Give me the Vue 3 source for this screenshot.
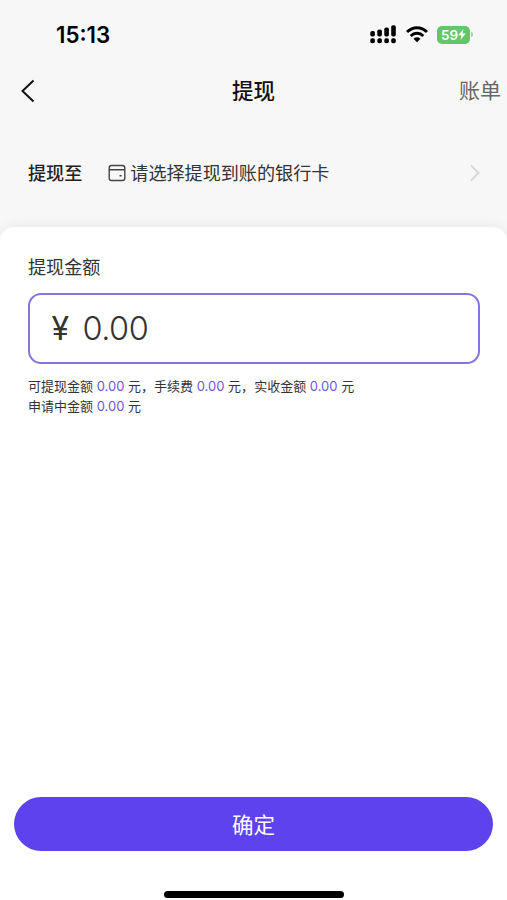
<template>
  <div class="page">
    <div class="statusBar">
      <span class="time">15:13</span>
      <div class="statusIcons">
        <svg class="signal" width="26" height="19" viewBox="0 0 26 19">
          <g fill="#000">
            <rect x="0.3" y="6" width="4.6" height="5.5" rx="1.8" />
            <rect x="7.3" y="4.5" width="4.6" height="7" rx="1.8" />
            <rect x="14.3" y="2.5" width="4.6" height="9" rx="1.8" />
            <rect x="21.2" y="0.3" width="4.6" height="11.2" rx="1.8" />
            <rect v-for="x in [0.3, 7.3, 14.3, 21.2]" :key="x" :x="x" y="13.3" width="4.6" height="4.9" rx="1.8" />
          </g>
        </svg>
        <svg class="wifi" width="22" height="17" viewBox="0 0 22 17">
          <g fill="none" stroke="#000" stroke-width="2.9">
            <path d="M1 6.1C6.7 0.3 15.3 0.3 21 6.1" />
            <path d="M4.7 10C8.3 6.4 13.7 6.4 17.3 10" />
          </g>
          <path d="M7.5 12.7C9.5 10.9 12.5 10.9 14.5 12.7L11 16.3Z" fill="#000" />
        </svg>
        <div class="battery">
          <span>59</span>
          <svg width="8" height="11" viewBox="0 0 8 11">
            <path d="M5.4 0.1L0.3 6.3H3.3L2.4 10.9L7.7 4.5H4.7Z" fill="#fff" />
          </svg>
        </div>
        <i class="batteryCap"></i>
      </div>
    </div>

    <div class="navBar">
      <svg class="back" width="16" height="24" viewBox="0 0 16 24">
        <path d="M13.5 1.6L2.5 12L13.5 22.4" fill="none" stroke="#111" stroke-width="2" />
      </svg>
      <h1 class="title">提现</h1>
      <span class="bill">账单</span>
    </div>

    <div class="bankRow">
      <span class="bankLabel">提现至</span>
      <svg class="cardIcon" width="18" height="18" viewBox="0 0 18 18">
        <g fill="none" stroke="#444" stroke-width="1.4">
          <rect x="1.2" y="1.5" width="15.6" height="15" rx="2.3" />
          <path d="M1.2 5.7H16.8M11.5 11.8H13.6" />
        </g>
      </svg>
      <span class="bankText">请选择提现到账的银行卡</span>
      <svg class="arrow" width="10" height="18" viewBox="0 0 10 18">
        <path d="M1 1.4L8.5 9L1 16.6" fill="none" stroke="#d6d6d6" stroke-width="1.9" />
      </svg>
    </div>

    <div class="panel">
      <div class="amountTitle">提现金额</div>
      <div class="amountBox">
        <span class="yen">¥</span>
        <span class="amount">{{ amount }}</span>
      </div>
      <div class="tips">
        <div>
          <template v-for="(item, index) in tips" :key="item.name">{{ item.name }} <b>{{ item.value }}</b> 元<template v-if="index < tips.length - 1">，</template></template>
        </div>
        <div>申请中金额 <b>{{ pending }}</b> 元</div>
      </div>
      <button class="submitBtn">确定</button>
      <div class="homeBar"></div>
    </div>
  </div>
</template>

<script setup>
import { ref } from 'vue'

const amount = ref('0.00')
const pending = ref('0.00')
const tips = ref([
  { name: '可提现金额', value: '0.00' },
  { name: '手续费', value: '0.00' },
  { name: '实收金额', value: '0.00' }
])
</script>

<style>
body {
  background-color: #f7f7f7;
}
</style>

<style scoped>
.page {
  display: flex;
  flex-direction: column;
  height: 900px;
  overflow: hidden;
  background-color: #f7f7f7;
  font-family: Inter, "Noto Sans CJK SC", sans-serif;
  color: #333;
}

.page svg {
  display: block;
  flex-shrink: 0;
}

.statusBar {
  display: flex;
  justify-content: space-between;
  align-items: center;
  height: 69px;
  padding: 0 34px 0 56px;
  box-sizing: border-box;
}

.time {
  font-size: 22.3px;
  font-weight: 600;
  color: #000;
}

.statusIcons {
  display: flex;
  align-items: center;
}

.wifi {
  margin-left: 10px;
}

.battery {
  display: flex;
  align-items: center;
  justify-content: center;
  width: 33px;
  height: 18px;
  margin-left: 9px;
  border-radius: 5px;
  background-color: #62c766;
  color: #fff;
  font-size: 13.5px;
  font-weight: 600;
}

.batteryCap {
  width: 2px;
  height: 5px;
  margin-left: 1px;
  border-radius: 0 2px 2px 0;
  background-color: #9bd8a0;
}

.navBar {
  display: grid;
  grid-template-columns: 1fr auto 1fr;
  align-items: center;
  height: 44px;
}

.back {
  margin-left: 20px;
}

.title {
  margin: 0;
  padding-bottom: 3px;
  font-size: 21.5px;
  font-weight: 500;
  color: #111;
}

.bill {
  justify-self: end;
  padding: 0 6px 4px 0;
  font-size: 21px;
  color: #666;
}

.bankRow {
  display: flex;
  align-items: center;
  height: 114px;
  padding: 6px 27px 0 28px;
  box-sizing: border-box;
  font-size: 18.1px;
}

.bankLabel,
.bankText {
  padding-bottom: 2px;
}

.bankLabel {
  font-weight: 500;
  color: #222;
}

.cardIcon {
  margin: 0 4px 0 26px;
}

.bankText {
  flex: 1;
}

.panel {
  display: flex;
  flex-direction: column;
  flex: 1;
  padding: 27px 14px 2px;
  border-radius: 14px 14px 0 0;
  background-color: #fff;
  box-shadow: 0 0 14px rgba(0, 0, 0, 0.07);
}

.amountTitle {
  padding: 0 14px;
  font-size: 18.1px;
  line-height: 27px;
}

.amountBox {
  display: flex;
  align-items: center;
  height: 71px;
  margin: 12px 13px 0 13.5px;
  padding-left: 22px;
  box-sizing: border-box;
  border: 2px solid #8477db;
  border-radius: 13px;
  font-size: 32.5px;
}

.yen {
  width: 31px;
  font-size: 32px;
}

.amount {
  font-weight: 350;
  letter-spacing: -0.5px;
}

.tips {
  flex: 1;
  padding: 12px 14px 0;
  font-size: 13px;
  line-height: 20px;
}

.tips b {
  font-weight: 400;
  color: #6b57db;
}

.submitBtn {
  height: 54px;
  padding: 0 0 2px;
  border: none;
  border-radius: 27px;
  background-color: #5d42ed;
  color: #fff;
  font-family: inherit;
  font-size: 21.5px;
  cursor: pointer;
}

.homeBar {
  width: 180px;
  height: 7px;
  margin: 40px auto 0;
  border-radius: 4px;
  background-color: #000;
}
</style>
